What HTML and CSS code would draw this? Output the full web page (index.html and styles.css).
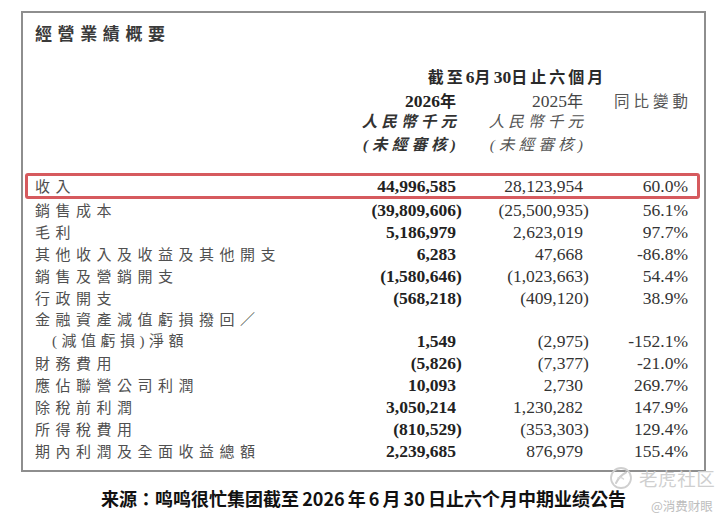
FILE: index.html
```html
<!DOCTYPE html>
<html lang="zh-Hant">
<head>
<meta charset="utf-8">
<title>經營業績概要</title>
<link rel="stylesheet" href="styles.css">
</head>
<body>
<div class="page">
  <section class="box">
    <h1 class="title">經營業績概要</h1>
    <div class="head">
      <div class="row hrow">
        <div class="period">截至<b class="lat">6</b>月<b class="lat">30</b>日止六個月</div>
      </div>
      <div class="row hrow">
        <div></div>
        <div class="c1 hb"><span class="lat">2026</span><span class="cj">年</span></div>
        <div class="c2 hr"><span class="lat">2025</span><span class="cj">年</span></div>
        <div class="c3 hr"><span class="sp">同比變動</span></div>
      </div>
      <div class="row hrow">
        <div></div>
        <div class="c1 it bold"><span class="sp">人民幣千元</span></div>
        <div class="c2 it"><span class="sp">人民幣千元</span></div>
        <div></div>
      </div>
      <div class="row hrow">
        <div></div>
        <div class="c1 it bold"><span class="sp">(未經審核)</span></div>
        <div class="c2 it"><span class="sp">(未經審核)</span></div>
        <div></div>
      </div>
    </div>

    <div class="body">
      <div class="row hl">
        <div class="lbl">收入</div>
        <div class="c1 num b">44,996,585</div>
        <div class="c2 num">28,123,954</div>
        <div class="c3 num">60.0%</div>
      </div>
      <div class="row">
        <div class="lbl">銷售成本</div>
        <div class="c1 num b">(39,809,606<span class="cp">)</span></div>
        <div class="c2 num">(25,500,935<span class="cp">)</span></div>
        <div class="c3 num">56.1%</div>
      </div>
      <div class="row">
        <div class="lbl">毛利</div>
        <div class="c1 num b">5,186,979</div>
        <div class="c2 num">2,623,019</div>
        <div class="c3 num">97.7%</div>
      </div>
      <div class="row">
        <div class="lbl">其他收入及收益及其他開支</div>
        <div class="c1 num b">6,283</div>
        <div class="c2 num">47,668</div>
        <div class="c3 num">-86.8%</div>
      </div>
      <div class="row">
        <div class="lbl">銷售及營銷開支</div>
        <div class="c1 num b">(1,580,646<span class="cp">)</span></div>
        <div class="c2 num">(1,023,663<span class="cp">)</span></div>
        <div class="c3 num">54.4%</div>
      </div>
      <div class="row">
        <div class="lbl">行政開支</div>
        <div class="c1 num b">(568,218<span class="cp">)</span></div>
        <div class="c2 num">(409,120<span class="cp">)</span></div>
        <div class="c3 num">38.9%</div>
      </div>
      <div class="row">
        <div class="lbl">金融資產減值虧損撥回／</div>
        <div></div>
        <div></div>
        <div></div>
      </div>
      <div class="row">
        <div class="lbl indent">(減值虧損)淨額</div>
        <div class="c1 num b">1,549</div>
        <div class="c2 num">(2,975<span class="cp">)</span></div>
        <div class="c3 num">-152.1%</div>
      </div>
      <div class="row">
        <div class="lbl">財務費用</div>
        <div class="c1 num b">(5,826<span class="cp">)</span></div>
        <div class="c2 num">(7,377<span class="cp">)</span></div>
        <div class="c3 num">-21.0%</div>
      </div>
      <div class="row">
        <div class="lbl">應佔聯營公司利潤</div>
        <div class="c1 num b">10,093</div>
        <div class="c2 num">2,730</div>
        <div class="c3 num">269.7%</div>
      </div>
      <div class="row">
        <div class="lbl">除稅前利潤</div>
        <div class="c1 num b">3,050,214</div>
        <div class="c2 num">1,230,282</div>
        <div class="c3 num">147.9%</div>
      </div>
      <div class="row">
        <div class="lbl">所得稅費用</div>
        <div class="c1 num b">(810,529<span class="cp">)</span></div>
        <div class="c2 num">(353,303<span class="cp">)</span></div>
        <div class="c3 num">129.4%</div>
      </div>
      <div class="row">
        <div class="lbl">期內利潤及全面收益總額</div>
        <div class="c1 num b">2,239,685</div>
        <div class="c2 num">876,979</div>
        <div class="c3 num">155.4%</div>
      </div>
    </div>
  </section>

  <p class="caption">来源：鸣鸣很忙集团截至 2026 年 6 月 30 日止六个月中期业绩公告</p>

  <div class="wm">
    <svg class="wm-logo" width="24" height="24" viewBox="0 0 24 24" aria-hidden="true">
      <circle cx="12" cy="12" r="10" fill="none" stroke="#cfcfcf" stroke-width="1.8"/>
      <path d="M7 17 C9 13 12 9 17 6.5" fill="none" stroke="#cfcfcf" stroke-width="2" stroke-linecap="round"/>
      <path d="M9 12 C11 11 13 11.5 14.5 13" fill="none" stroke="#d8d8d8" stroke-width="1.4" stroke-linecap="round"/>
    </svg>
    <span class="wm-name">老虎社区</span>
  </div>
  <div class="wm-handle">@消费财眼</div>
</div>
</body>
</html>
```

FILE: styles.css
```css
html, body {
  margin: 0;
  padding: 0;
  background: #ffffff;
}

.page {
  position: relative;
  width: 728px;
  height: 522px;
  padding: 11px 22px 0 21px;
  box-sizing: border-box;
  font-family: "Noto Sans CJK TC", sans-serif;
  color: #333;
}

.box {
  border: 2px solid #8e8e8e;
  padding: 9px 16px 8px 12px;
}

.title {
  margin: 0;
  font-size: 17px;
  line-height: 22px;
  font-weight: 700;
  letter-spacing: 5.6px;
  color: #3a3a3a;
}

.head {
  margin-top: 22px;
}

.row {
  display: grid;
  grid-template-columns: 1fr 120px 127px 105px;
  height: 21.9px;
  align-items: center;
}

.hrow {
  height: 22.5px;
}

.row > div {
  line-height: 22px;
  white-space: nowrap;
}

.period {
  grid-column: 2 / 5;
  text-align: center;
  padding-left: 10px;
  font-family: "Liberation Serif", "Noto Sans CJK TC", serif;
  font-size: 16px;
  font-weight: 700;
  letter-spacing: 3px;
  color: #2a2a2a;
}

.lat {
  font-family: "Liberation Serif", serif;
  font-size: 17.5px;
  letter-spacing: 0;
}

.cj {
  font-family: "Noto Sans CJK TC", sans-serif;
  font-size: 16px;
}

.c1, .c2, .c3 {
  text-align: right;
}

.hb {
  font-weight: 700;
  color: #222;
}

.hr {
  color: #444;
}

.c3.hr {
  font-size: 15.5px;
  color: #555;
}

.sp {
  letter-spacing: 4px;
  margin-right: -4px;
}

.it {
  font-family: "Liberation Serif", "Noto Sans CJK TC", serif;
  font-style: italic;
  font-size: 15.5px;
  color: #555;
}

.it.bold {
  font-weight: 700;
  color: #333;
}

.it .sp {
  letter-spacing: 4.2px;
  margin-right: -4.2px;
}

.body {
  margin-top: 17px;
}

.hl {
  height: 26px;
  box-sizing: border-box;
  margin: 0 -12px 0 -10px;
  padding: 0 9px 0 7px;
  border: 3px solid #d65a5e;
  border-radius: 3px;
}

.hl > div {
  line-height: 20px;
}

.lbl {
  font-size: 15px;
  letter-spacing: 5.5px;
  color: #505050;
}

.indent {
  font-family: "Liberation Serif", "Noto Sans CJK TC", serif;
  padding-left: 17px;
  letter-spacing: 4.5px;
}

.num {
  font-family: "Liberation Serif", serif;
  font-size: 17.5px;
  color: #333;
}

.num.b {
  font-weight: 700;
  color: #222;
}

.cp {
  margin-right: -0.333em;
}

.caption {
  margin: 13px 0 0;
  text-align: center;
  font-family: "Noto Sans CJK SC", sans-serif;
  font-size: 18px;
  line-height: 26px;
  font-weight: 700;
  letter-spacing: 0;
  word-spacing: -1px;
  color: #111;
}

.wm {
  position: absolute;
  left: 609px;
  top: 466px;
  display: flex;
  align-items: center;
  gap: 6px;
}

.wm-logo {
  display: block;
}

.wm-name {
  font-family: "Noto Sans CJK SC", sans-serif;
  font-size: 18.5px;
  line-height: 24px;
  color: #cfcfcf;
  letter-spacing: 0.6px;
}

.wm-handle {
  position: absolute;
  left: 651px;
  top: 497px;
  font-family: "Noto Sans CJK SC", sans-serif;
  font-size: 12.5px;
  line-height: 18px;
  color: #bdbdbd;
}
```
